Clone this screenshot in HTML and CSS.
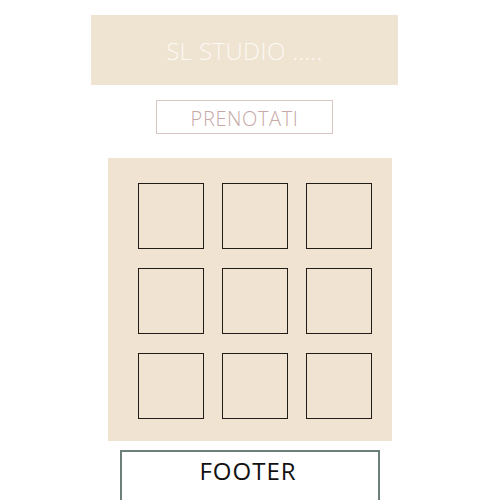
FILE: index.html
```html
<!DOCTYPE html>
<html>
<head>
<meta charset="utf-8">
<link rel="stylesheet" href="styles.css">
</head>
<body>
<div class="page">
  <header class="hero"><span class="hero-title">SL STUDIO .....</span></header>
  <a class="book">PRENOTATI</a>
  <section class="gallery">
    <div class="tile"></div><div class="tile"></div><div class="tile"></div>
    <div class="tile"></div><div class="tile"></div><div class="tile"></div>
    <div class="tile"></div><div class="tile"></div><div class="tile"></div>
  </section>
  <footer class="footer">FOOTER</footer>
</div>
</body>
</html>
```
FILE: styles.css
```css
html, body { margin: 0; padding: 0; background: #fff; }
body { font-family: "Open Sans", "Liberation Sans", sans-serif; overflow: hidden; height: 500px; }
.page { display: flex; flex-direction: column; align-items: flex-start; padding-top: 15px; }
.hero {
  margin-left: 91px; width: 307px; height: 70px;
  background: #efe3d2;
  display: flex; align-items: center; justify-content: center;
}
.hero-title { color: #fdf9f3; font-size: 24px; font-weight: 300; letter-spacing: 0.4px; margin-top: 1px; }
.book {
  margin-top: 15px; margin-left: 156px; width: 177px; height: 34px; box-sizing: border-box;
  border: 1px solid #d9c5c2; color: #c6a9a5; font-size: 20px; font-weight: 300;
  display: flex; align-items: center; justify-content: center; letter-spacing: 0.6px; padding-top: 2px;
}
.gallery {
  margin-top: 24px; margin-left: 108px; width: 284px; height: 283px; box-sizing: border-box;
  background: #f0e3d2;
  display: grid; grid-template-columns: repeat(3, 66px); grid-auto-rows: 66px;
  column-gap: 18px; row-gap: 19px; padding: 25px 0 0 30px;
}
.tile { border: 1.5px solid #221c18; box-sizing: border-box; }
.footer {
  margin-top: 9px; margin-left: 120px; width: 260px; height: 80px; box-sizing: border-box;
  border: 2px solid #6c7f7b; text-align: center; font-size: 24px; color: #111;
  padding-top: 3px; padding-right: 4px; line-height: 32px; letter-spacing: 1px;
}
```
